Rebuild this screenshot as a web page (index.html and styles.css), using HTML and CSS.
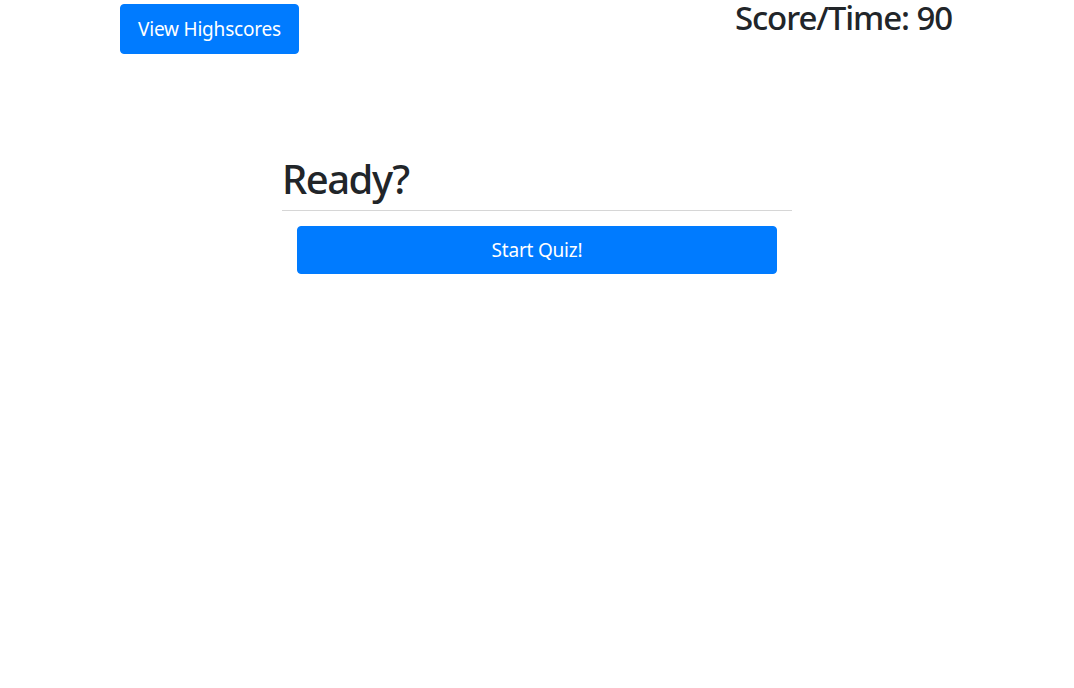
FILE: index.html
```html
<!DOCTYPE html>
<html lang="en">
<head>
<meta charset="utf-8">
<title>Quiz</title>
<link rel="stylesheet" href="styles.css">
</head>
<body>
<header class="topbar">
  <button class="btn btn-top">View Highscores</button>
  <h2 class="score">Score/Time: <span>90</span></h2>
</header>
<main class="quiz">
  <h1 class="title">Ready?</h1>
  <hr class="rule">
  <div class="actions">
    <button class="btn btn-start">Start Quiz!</button>
  </div>
</main>
</body>
</html>
```
FILE: styles.css
```css
* { box-sizing: border-box; }
html, body { margin: 0; padding: 0; background: #fff; }
body {
  font-family: "Noto Sans", "Open Sans", sans-serif;
  color: #212529;
  width: 1074px;
  height: 688px;
}
.topbar {
  display: flex;
  justify-content: space-between;
  align-items: flex-start;
  padding: 0 120px;
}
.btn {
  font-family: inherit;
  background: #007bff;
  color: #fff;
  border: 1px solid #007bff;
  border-radius: 4px;
  font-size: 19px;
  letter-spacing: -0.2px;
  cursor: pointer;
}
.btn-top {
  margin-top: 4px;
  width: 179px;
  height: 50px;
  padding: 0 14px;
}
.score {
  margin: 2px 2px 0 0;
  font-size: 33px;
  font-weight: 500;
  line-height: 32px;
  letter-spacing: -1.1px;
}
.quiz {
  width: 510px;
  margin: 100px auto 0;
}
.title {
  margin: 0;
  font-size: 40px;
  font-weight: 500;
  line-height: 50px;
  letter-spacing: -1.5px;
}
.rule {
  margin: 6px 0 0;
  border: 0;
  border-top: 1px solid #d6d6d6;
}
.actions {
  padding: 15px 15px 0;
}
.btn-start {
  display: block;
  width: 100%;
  height: 48px;
}
```
